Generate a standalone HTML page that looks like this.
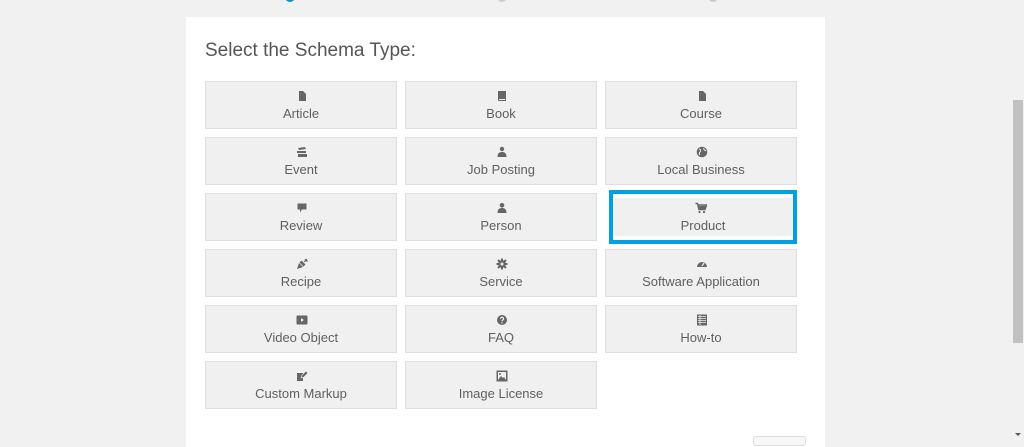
<!DOCTYPE html>
<html><head><meta charset="utf-8"><style>
*{margin:0;padding:0;box-sizing:border-box}
body{width:1024px;height:441px;background:#f1f1f1;position:relative;overflow:hidden;font-family:"Liberation Sans",sans-serif}
.card{position:absolute;left:186px;top:17px;width:639px;height:430px;background:#fff}
h1{position:absolute;left:205px;top:40px;font-size:19px;font-weight:normal;color:#555}
.b{position:absolute;width:192px;height:48px;background:#f0f0f0;border:1px solid #dedede;text-align:center;color:#5f5f5f;font-size:13px}
.b svg{position:absolute;left:90px;top:8px;width:12px;height:12px}
.b span{position:absolute;left:0;right:0;top:24px}
.hl{position:absolute;left:609px;top:190px;width:188px;height:54px;border:4px solid #00a0e3;background:#fff}
.sb{position:absolute;left:1012px;top:0;width:12px;height:441px;background:#f1f1f1}
.th{position:absolute;left:1013px;top:100px;width:10px;height:243px;background:#c1c1c1}
.dot{position:absolute;top:-8px;width:10px;height:10px;border-radius:50%}
</style></head><body>
<div class="dot" style="left:285px;background:#0a8fd0"></div>
<div class="dot" style="left:497px;background:#ccc"></div>
<div class="dot" style="left:708px;background:#ccc"></div>
<div class="card"></div>
<h1>Select the Schema Type:</h1>

<div class="b" style="left:205px;top:81px"><svg viewBox="0 0 12 12"><path d="M3 1h4l3 3v7H3z" fill="#666"/></svg><span>Article</span></div>
<div class="b" style="left:405px;top:81px"><svg viewBox="0 0 12 12"><path d="M2 1h8v10H3a1 1 0 0 1-1-1z" fill="#666"/><path d="M3 9.5h6" stroke="#f0f0f0"/></svg><span>Book</span></div>
<div class="b" style="left:605px;top:81px"><svg viewBox="0 0 12 12"><path d="M3 1h4l3 3v7H3z" fill="#666"/></svg><span>Course</span></div>

<div class="b" style="left:205px;top:137px"><svg viewBox="0 0 12 12"><path d="M2 2l7-1 1 2-7 1zM1 5h9v2H1zM2 8h9v3H2z" fill="#666"/></svg><span>Event</span></div>
<div class="b" style="left:405px;top:137px"><svg viewBox="0 0 12 12"><circle cx="6" cy="3" r="2.2" fill="#666"/><path d="M1.5 11c0-4 2-5 4.5-5s4.5 1 4.5 5z" fill="#666"/></svg><span>Job Posting</span></div>
<div class="b" style="left:605px;top:137px"><svg viewBox="0 0 12 12"><circle cx="6" cy="6" r="5.3" fill="#666"/><path d="M3 3c2 0 2 2 1 3s-1 2 0 3M8 2c-1 2 1 2 2 3" stroke="#f0f0f0" fill="none"/></svg><span>Local Business</span></div>

<div class="b" style="left:205px;top:193px"><svg viewBox="0 0 12 12"><path d="M1.5 1.5h9v6H6l-2 3v-3H1.5z" fill="#666"/></svg><span>Review</span></div>
<div class="b" style="left:405px;top:193px"><svg viewBox="0 0 12 12"><circle cx="6" cy="3.3" r="2.3" fill="#666"/><path d="M1.5 11c0-4 2-5 4.5-5s4.5 1 4.5 5z" fill="#666"/></svg><span>Person</span></div>
<div class="hl"></div>
<div style="position:absolute;left:613px;top:198px;width:180px;height:38px;background:#f0f0f0;border-radius:2px"></div>
<div style="position:absolute;left:613px;top:194px;width:180px;height:46px;text-align:center;color:#5f5f5f;font-size:13px"><svg viewBox="0 0 12 12" style="position:absolute;left:82px;top:8px;width:12px;height:12px"><path d="M0.5 1.5h2l1.5 6h6l1.5-4.5H3" fill="none" stroke="#666" stroke-width="1.5"/><path d="M3.5 4h7l-1 3h-5z" fill="#666"/><circle cx="4.5" cy="10" r="1.1" fill="#666"/><circle cx="9" cy="10" r="1.1" fill="#666"/></svg><span style="position:absolute;left:0;right:0;top:24px">Product</span></div>

<div class="b" style="left:205px;top:249px"><svg viewBox="0 0 12 12"><path d="M1 11l2-6 4 4zM3.5 4.5l4 4 2-2-4-4z" fill="#666"/><path d="M8 4l3-3M9 1l1 2 2 0" stroke="#666"/></svg><span>Recipe</span></div>
<div class="b" style="left:405px;top:249px"><svg viewBox="0 0 12 12"><circle cx="6" cy="6" r="3.8" fill="#666"/><path d="M6 0.5v11M0.5 6h11M2 2l8 8M10 2l-8 8" stroke="#666" stroke-width="2"/><circle cx="6" cy="6" r="1.5" fill="#f0f0f0"/></svg><span>Service</span></div>
<div class="b" style="left:605px;top:249px"><svg viewBox="0 0 12 12"><path d="M1 9a5 5 0 1 1 10 0z" fill="#666"/><path d="M6 8l2-3" stroke="#f0f0f0" stroke-width="1.2"/></svg><span>Software Application</span></div>

<div class="b" style="left:205px;top:305px"><svg viewBox="0 0 12 12"><rect x="0.5" y="1.5" width="11" height="9" rx="1" fill="#666"/><path d="M5 4v4l3-2z" fill="#f0f0f0"/></svg><span>Video Object</span></div>
<div class="b" style="left:405px;top:305px"><svg viewBox="0 0 12 12"><circle cx="6" cy="6" r="5" fill="#666"/><path d="M4.5 4.8a1.5 1.5 0 1 1 2 1.4c-.5.2-.5.6-.5 1.2" stroke="#f0f0f0" fill="none" stroke-width="1.2"/><circle cx="6" cy="9" r=".7" fill="#f0f0f0"/></svg><span>FAQ</span></div>
<div class="b" style="left:605px;top:305px"><svg viewBox="0 0 12 12"><rect x="1" y="0.5" width="10" height="11" fill="#666"/><path d="M2 2.5h8M2 4.5h8M2 6.5h8M2 8.5h8M4 1v10" stroke="#f0f0f0" stroke-width=".8"/></svg><span>How-to</span></div>

<div class="b" style="left:205px;top:361px"><svg viewBox="0 0 12 12"><path d="M1 3h6v8H1z" fill="#666"/><path d="M5 8l1-3 4-4 2 2-4 4z" fill="#666" stroke="#f0f0f0" stroke-width=".6"/></svg><span>Custom Markup</span></div>
<div class="b" style="left:405px;top:361px"><svg viewBox="0 0 12 12"><rect x="0.5" y="0.5" width="11" height="11" fill="#666"/><rect x="2" y="2" width="8" height="8" fill="#f0f0f0"/><path d="M2 10l3-4 2 2 1-1 2 3z" fill="#666"/><circle cx="4" cy="4" r="1" fill="#666"/></svg><span>Image License</span></div>

<div style="position:absolute;left:753px;top:436px;width:53px;height:10px;border:1px solid #ddd;border-radius:3px;background:#f7f7f7"></div>
<div class="sb"></div><div class="th"></div>
<div style="position:absolute;left:1015px;top:433px;width:0;height:0;border-left:3px solid transparent;border-right:3px solid transparent;border-top:3px solid #555"></div>
</body></html>
